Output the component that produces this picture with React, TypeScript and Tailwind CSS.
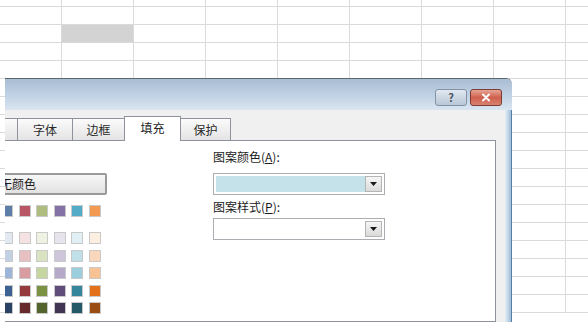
import React from "react";

const COLS = [62, 72, 72, 72, 72, 72, 72, 72, 72];
const ROWS = [7, ...Array(17).fill(18)];

const THEME_ROW = ["#ffffff", "#000000", "#eeece1", "#1f497d", "#5d7ea8", "#b95665", "#afbd7f", "#8472a6", "#54abc8", "#f29a52"];

const TINTS = [
  ["#f2f2f2", "#7f7f7f", "#ddd9c3", "#c6d9f0", "#e3e9f2", "#f4e2e2", "#edf2e2", "#e8e4ee", "#e0f0f4", "#fdeee2"],
  ["#d8d8d8", "#595959", "#c4bd97", "#8db3e2", "#c2d0e3", "#e8c0c2", "#d9e3c2", "#cfc6db", "#bfe0e9", "#fad7bb"],
  ["#bfbfbf", "#3f3f3f", "#938953", "#548dd4", "#9db5d6", "#d99ca0", "#c5d6a1", "#b5a8c9", "#9bcfdd", "#f8c293"],
  ["#a5a5a5", "#262626", "#494429", "#17365d", "#3d6291", "#953a3c", "#7a9242", "#614d7c", "#35869b", "#e2711a"],
  ["#7f7f7f", "#0c0c0c", "#1d1b10", "#0f243e", "#2a4263", "#662a2c", "#53642d", "#423553", "#245a68", "#9a4e12"],
];

function Sheet() {
  return (
    <div className="flex flex-col">
      {ROWS.map((h, r) => (
        <div key={r} className={`flex shrink-0 ${h === 7 ? "h-[7px]" : "h-[18px]"}`}>
          {COLS.map((w, c) => (
            <div
              key={c}
              className={`shrink-0 border-b border-r border-[#dadada] ${w === 62 ? "w-[62px]" : "w-[72px]"} ${
                r === 2 && c === 1 ? "bg-[#d3d3d3]" : ""
              }`}
            />
          ))}
        </div>
      ))}
    </div>
  );
}

function TitleBar() {
  return (
    <div className="flex h-[31px] shrink-0 items-start justify-end gap-[3px] bg-gradient-to-b from-[#a9bdd3] via-[#bfd1e4] to-[#dae5f0] pr-[10px] pt-[10px]">
      <div className="flex h-[17px] w-[32px] items-center justify-center rounded-[3px] border border-[#8393a6] bg-gradient-to-b from-[#e1e8f0] to-[#b9c7d6] text-[11px] font-bold leading-none text-[#4a5563]">
        ?
      </div>
      <div className="flex h-[17px] w-[32px] items-center justify-center rounded-[3px] border border-[#7d3b31] bg-gradient-to-b from-[#e6a596] via-[#cf604e] to-[#d9836f]">
        <svg width="10" height="9" viewBox="0 0 10 9">
          <path d="M2 1.5 L8 7.5 M8 1.5 L2 7.5" stroke="#ffffff" strokeWidth="2" strokeLinecap="round" />
        </svg>
      </div>
    </div>
  );
}

// first two tabs sit outside the visible crop, so they carry no label
const TABS = [
  { label: "", w: "w-[53px]" },
  { label: "", w: "w-[53px]" },
  { label: "字体", w: "w-[56px]" },
  { label: "边框", w: "w-[53px]" },
  { label: "填充", w: "w-[57px]", active: true },
  { label: "保护", w: "w-[51px]" },
];

function Tabs() {
  return (
    <div className="relative z-10 ml-[-92px] flex h-[30px] shrink-0 items-end">
      {TABS.map((t, i) => (
        <div
          key={i}
          className={`flex shrink-0 items-center justify-center border border-b-0 border-[#8e939b] ${t.w} ${
            i > 0 ? "-ml-px" : ""
          } ${
            t.active
              ? "-mb-px h-[25px] bg-white pb-[2px]"
              : "h-[22px] bg-gradient-to-b from-[#fbfbfb] to-[#e4e4e4] text-[#2a2a2a]"
          }`}
        >
          {t.label}
        </div>
      ))}
    </div>
  );
}

function Combo({ fill }: { fill?: boolean }) {
  return (
    <div className="flex h-[22px] w-[172px] border border-[#abadb3] bg-white p-[2px]">
      <div className={`flex-1 ${fill ? "bg-[#c5e1ea]" : "bg-white"}`} />
      <div className="flex w-[17px] items-center justify-center border border-[#b5b5b5] bg-gradient-to-b from-[#f6f6f6] to-[#dadada]">
        <svg width="7" height="4" viewBox="0 0 7 4">
          <path d="M0 0 H7 L3.5 4 Z" fill="#1a1a1a" />
        </svg>
      </div>
    </div>
  );
}

function Swatch({ color }: { color: string }) {
  return <div className="h-[12px] w-[12px] shrink-0 border border-[#c9c9c9]" style={{ backgroundColor: color }} />;
}

function FillPanel() {
  return (
    <div className="ml-[-100px] mr-[9px] flex flex-1 border border-[#8e939b] bg-white">
      <div className="ml-[23px] flex w-[178px] shrink-0 flex-col pt-[8px]">
        <div className="h-[16px]" />
        <div className="mt-[8px] flex h-[22px] items-center justify-center rounded-[2px] border-2 border-[#9a9a9a] bg-gradient-to-b from-[#f7f7f7] to-[#e2e2e2]">
          无颜色
        </div>
        <div className="ml-[2px] mt-[10px] flex gap-[5.5px]">
          {THEME_ROW.map((c, i) => (
            <Swatch key={i} color={c} />
          ))}
        </div>
        <div className="ml-[2px] mt-[15px] flex flex-col gap-[5.5px]">
          {TINTS.map((row, r) => (
            <div key={r} className="flex gap-[5.5px]">
              {row.map((c, i) => (
                <Swatch key={i} color={c} />
              ))}
            </div>
          ))}
        </div>
      </div>
      <div className="ml-[106px] flex w-[172px] shrink-0 flex-col pt-[8px]">
        <div className="h-[16px] leading-[16px]">
          图案颜色(<u>A</u>):
        </div>
        <div className="mt-[8px]">
          <Combo fill />
        </div>
        <div className="mt-[4px] h-[16px] leading-[16px]">
          图案样式(<u>P</u>):
        </div>
        <div className="mt-[3px]">
          <Combo />
        </div>
      </div>
    </div>
  );
}

export default function App() {
  return (
    <div className="relative h-[322px] w-[588px] overflow-hidden bg-white font-['Noto_Sans_CJK_SC',sans-serif] text-[12px] text-[#1b1b1b]">
      <Sheet />
      <div className="absolute left-[5px] top-[78px] flex h-[244px] w-[507px] flex-col overflow-hidden rounded-tr-[6px] border-t border-[#5c6670]">
        <TitleBar />
        <div className="flex flex-1">
          <div className="flex w-[500px] shrink-0 flex-col bg-[#f0f0f0]">
            <Tabs />
            <FillPanel />
          </div>
          <div className="w-[7px] shrink-0 border-r border-[#5a7ea4] bg-gradient-to-r from-[#e6f1f7] to-[#9dbdd8]" />
        </div>
      </div>
    </div>
  );
}
